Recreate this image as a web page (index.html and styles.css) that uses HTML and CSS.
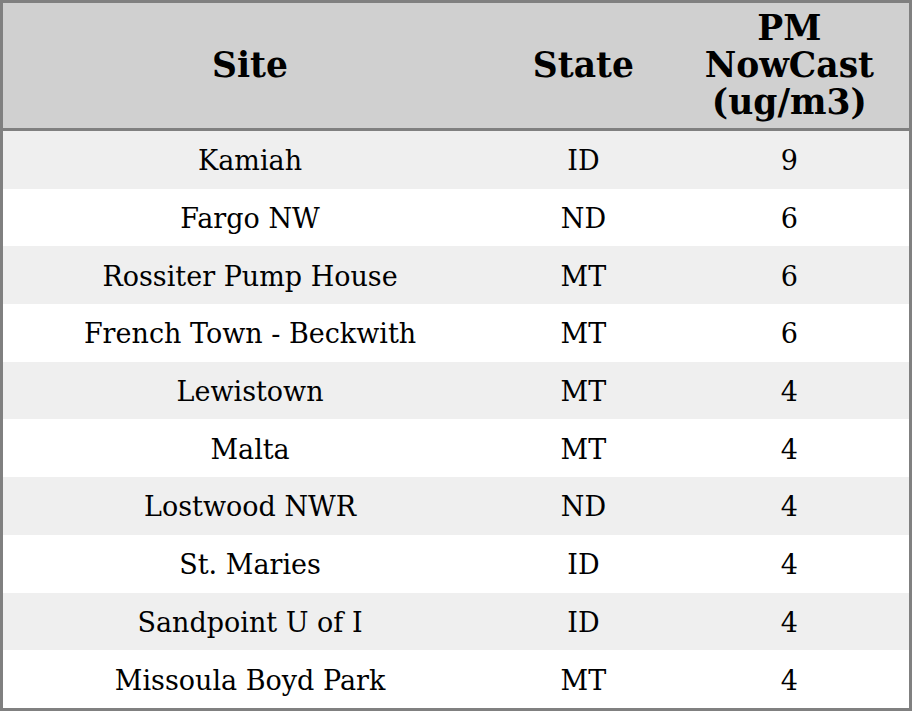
FILE: index.html
```html
<!DOCTYPE html>
<html>
<head>
<meta charset="utf-8">
<link rel="stylesheet" href="styles.css">
</head>
<body>
<table class="aq">
  <colgroup>
    <col class="c-site">
    <col class="c-state">
    <col class="c-pm">
  </colgroup>
  <thead>
    <tr><th>Site</th><th>State</th><th>PM<br>NowCast<br>(ug/m3)</th></tr>
  </thead>
  <tbody>
    <tr><td>Kamiah</td><td>ID</td><td>9</td></tr>
    <tr><td>Fargo NW</td><td>ND</td><td>6</td></tr>
    <tr><td>Rossiter Pump House</td><td>MT</td><td>6</td></tr>
    <tr><td>French Town - Beckwith</td><td>MT</td><td>6</td></tr>
    <tr><td>Lewistown</td><td>MT</td><td>4</td></tr>
    <tr><td>Malta</td><td>MT</td><td>4</td></tr>
    <tr><td>Lostwood NWR</td><td>ND</td><td>4</td></tr>
    <tr><td>St. Maries</td><td>ID</td><td>4</td></tr>
    <tr><td>Sandpoint U of I</td><td>ID</td><td>4</td></tr>
    <tr><td>Missoula Boyd Park</td><td>MT</td><td>4</td></tr>
  </tbody>
</table>
</body>
</html>
```
FILE: styles.css
```css
html, body {
  margin: 0;
  padding: 0;
  background: #ffffff;
}
.aq {
  width: 912px;
  height: 711px;
  border-collapse: collapse;
  table-layout: fixed;
  border: 3px solid #808080;
  font-family: "DejaVu Serif", serif;
  color: #000;
}
.c-site { width: 494px; }
.c-state { width: 172px; }
.c-pm { width: 240px; }
.aq thead tr {
  background: #d0d0d0;
  height: 128px;
}
.aq th {
  font-size: 34.5px;
  font-weight: bold;
  line-height: 37px;
  text-align: center;
  padding: 0;
  border-bottom: 3px solid #808080;
}
.aq td {
  font-size: 27px;
  text-align: center;
  padding: 2px 0 0 0;
  height: 55.7px;
}
.aq tbody tr:nth-child(odd) {
  background: #efefef;
}
```
